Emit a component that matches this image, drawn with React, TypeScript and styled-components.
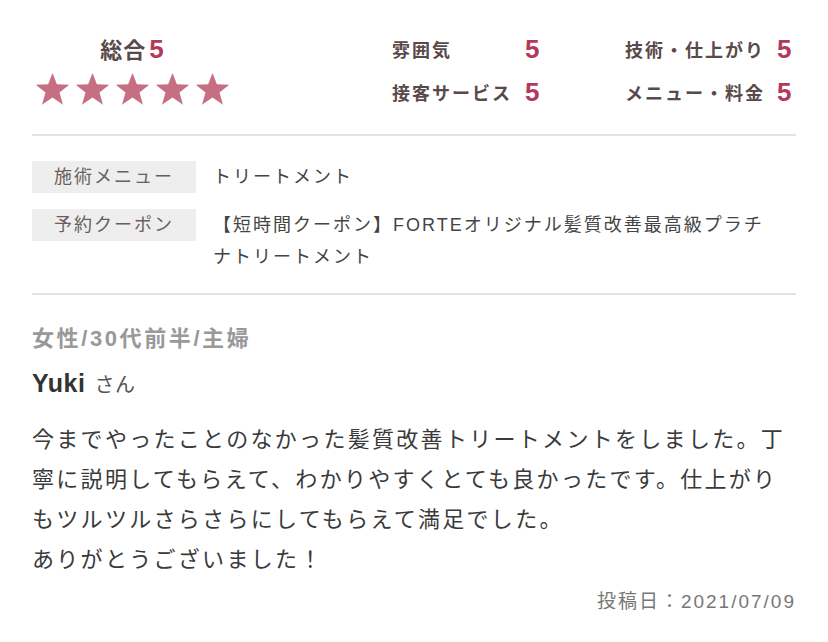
import React from "react";
import styled, { createGlobalStyle } from "styled-components";

const GlobalStyle = createGlobalStyle`
  body {
    margin: 0;
    background: #fff;
    font-family: "Liberation Sans", "Noto Sans CJK JP", sans-serif;
  }
`;

const Page = styled.div`
  padding: 0 32px;
`;

const Summary = styled.section`
  display: flex;
  padding: 34px 0 27px;
  border-bottom: 2px solid #e2e2e2;
`;

const Overall = styled.div`
  width: 200px;
  display: flex;
  flex-direction: column;
  align-items: center;
`;

const OverallTitle = styled.div`
  display: flex;
  align-items: baseline;
  gap: 3px;
  height: 30px;
  line-height: 30px;
  font-size: 22px;
  font-weight: bold;
  letter-spacing: 1px;
  color: #594a4a;
`;

const Score = styled.span<{ $size?: number }>`
  font-family: "Liberation Sans", sans-serif;
  font-size: ${(p) => p.$size || 26}px;
  font-weight: bold;
  letter-spacing: 0;
  color: #b3395c;
`;

const Stars = styled.div`
  display: flex;
  gap: 5px;
  margin-top: 8px;
`;

const Scores = styled.div`
  margin-left: 160px;
  display: grid;
  grid-template-columns: 233px auto;
  grid-auto-rows: 30px;
  row-gap: 13px;
`;

const ScoreItem = styled.div`
  display: flex;
  align-items: center;
  gap: 12px;
`;

const ScoreLabel = styled.span`
  min-width: 121px;
  font-size: 18px;
  font-weight: bold;
  letter-spacing: 2px;
  color: #594a4a;
`;

const MenuSection = styled.section`
  display: flex;
  flex-direction: column;
  gap: 16px;
  padding: 25px 0 20px;
  border-bottom: 2px solid #e2e2e2;
`;

const MenuRow = styled.div`
  display: flex;
  align-items: flex-start;
`;

const MenuLabel = styled.div`
  flex: 0 0 164px;
  height: 32px;
  line-height: 32px;
  text-align: center;
  background: #eeeeee;
  font-size: 18px;
  letter-spacing: 2px;
  color: #6b5d5d;
`;

const MenuValue = styled.div`
  margin-left: 17px;
  max-width: 560px;
  font-size: 18px;
  line-height: 32px;
  letter-spacing: 2px;
  color: #444;
`;

const Review = styled.section`
  padding-top: 30px;
`;

const Profile = styled.div`
  font-size: 22px;
  line-height: 28px;
  font-weight: bold;
  letter-spacing: 2.6px;
  color: #999;
`;

const Name = styled.div`
  margin-top: 16px;
  line-height: 28px;
  font-size: 25px;
  font-weight: bold;
  letter-spacing: 0.5px;
  color: #333;

  small {
    margin-left: 9px;
    font-size: 20px;
    font-weight: normal;
    color: #555;
  }
`;

const Body = styled.p`
  margin: 21px 0 0;
  font-size: 22px;
  line-height: 40px;
  letter-spacing: 2.3px;
  color: #3a3a3a;
`;

const PostDate = styled.div`
  margin-top: 9px;
  text-align: right;
  font-size: 19px;
  line-height: 26px;
  letter-spacing: 2px;
  color: #777;
`;

const Star = () => (
  <svg width="35" height="34" viewBox="0 0 24 23">
    <polygon
      points="12,0.5 15,8.3 23.5,8.6 16.8,13.9 19.2,22.3 12,17.4 4.8,22.3 7.2,13.9 0.5,8.6 9,8.3"
      fill="#c66f82"
    />
  </svg>
);

const scores = [
  { label: "雰囲気", value: 5 },
  { label: "技術・仕上がり", value: 5 },
  { label: "接客サービス", value: 5 },
  { label: "メニュー・料金", value: 5 },
];

const App: React.FC = () => {
  return (
    <Page>
      <GlobalStyle />
      <Summary>
        <Overall>
          <OverallTitle>
            総合<Score $size={26}>5</Score>
          </OverallTitle>
          <Stars>
            {[0, 1, 2, 3, 4].map((i) => (
              <Star key={i} />
            ))}
          </Stars>
        </Overall>
        <Scores>
          {scores.map((s) => (
            <ScoreItem key={s.label}>
              <ScoreLabel>{s.label}</ScoreLabel>
              <Score>{s.value}</Score>
            </ScoreItem>
          ))}
        </Scores>
      </Summary>

      <MenuSection>
        <MenuRow>
          <MenuLabel>施術メニュー</MenuLabel>
          <MenuValue>トリートメント</MenuValue>
        </MenuRow>
        <MenuRow>
          <MenuLabel>予約クーポン</MenuLabel>
          <MenuValue>
            【短時間クーポン】FORTEオリジナル髪質改善最高級プラチナトリートメント
          </MenuValue>
        </MenuRow>
      </MenuSection>

      <Review>
        <Profile>女性/30代前半/主婦</Profile>
        <Name>
          Yuki<small>さん</small>
        </Name>
        <Body>
          今までやったことのなかった髪質改善トリートメントをしました。丁寧に説明してもらえて、わかりやすくとても良かったです。仕上がりもツルツルさらさらにしてもらえて満足でした。
          <br />
          ありがとうございました！
        </Body>
        <PostDate>投稿日：2021/07/09</PostDate>
      </Review>
    </Page>
  );
};

export default App;
